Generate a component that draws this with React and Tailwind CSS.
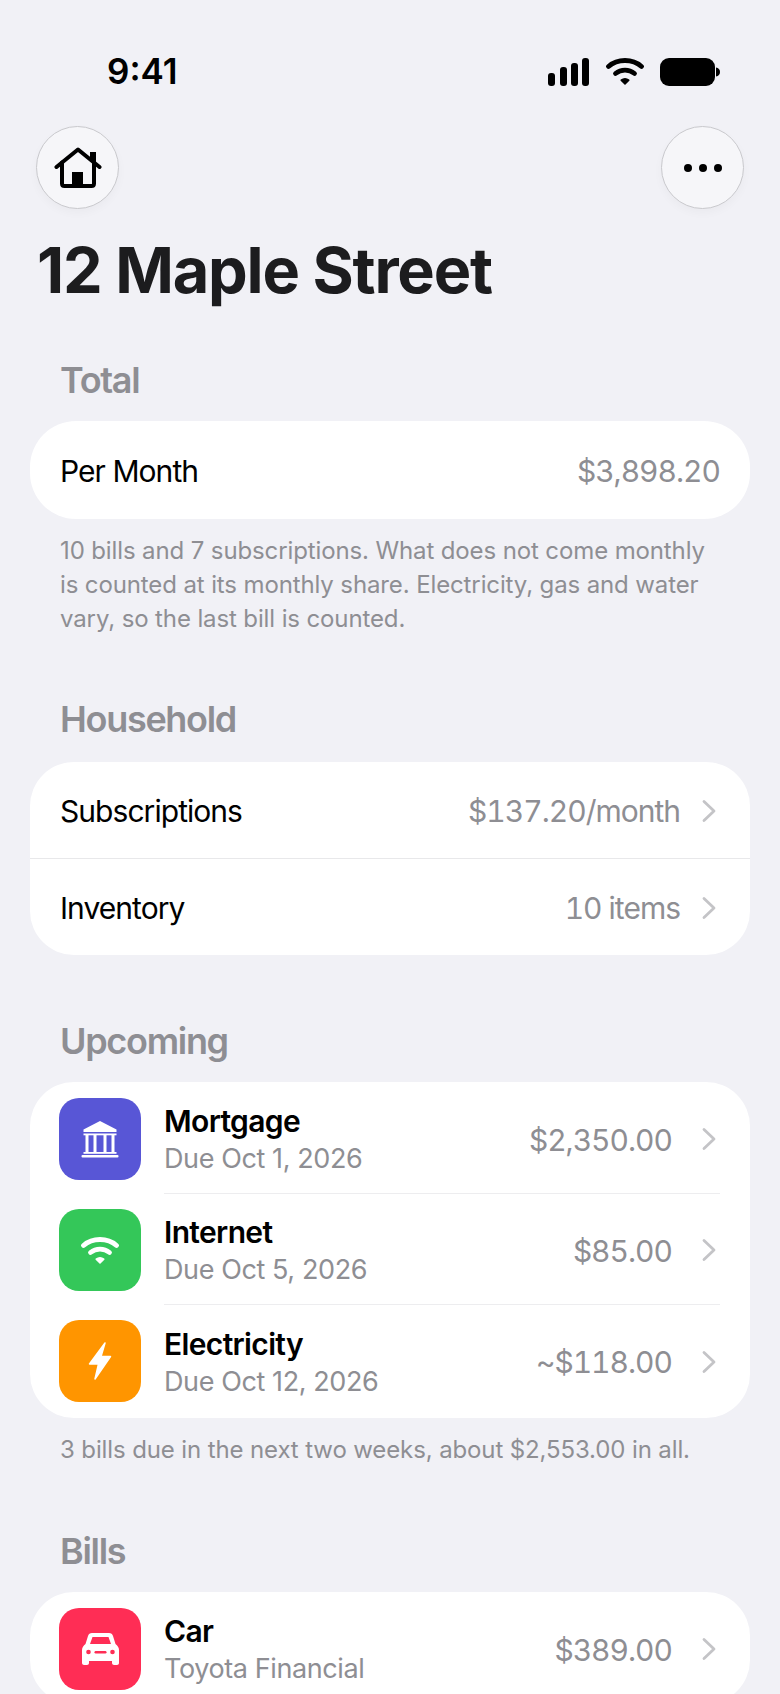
const FONT = 'font-["Inter","Liberation_Sans",sans-serif]';

function Signal() {
  return (
    <svg width="42" height="28" viewBox="0 0 42 28" fill="black">
      <rect x="0" y="15" width="7" height="13" rx="3" />
      <rect x="12" y="9" width="7" height="19" rx="3" />
      <rect x="23" y="5" width="7" height="23" rx="3" />
      <rect x="34" y="0" width="7" height="28" rx="3" />
    </svg>
  );
}

function WifiGlyph({ color = 'black', width = 38, height = 29 }) {
  return (
    <svg width={width} height={height} viewBox="0 0 38 29" fill="none" stroke={color} strokeWidth="4.800" strokeLinecap="round">
      <path d="M2.500 9.500C11.500 1.500 26.500 1.500 35.500 9.500" />
      <path d="M9.500 16.500C15 12 23 12 28.500 16.500" />
      <path d="M15.200 23.200L19 27L22.800 23.200C20.500 21.400 17.500 21.400 15.200 23.200Z" fill={color} strokeWidth="1.500" strokeLinejoin="round" />
    </svg>
  );
}

function Battery() {
  return (
    <svg width="60" height="28" viewBox="0 0 60 28" fill="black">
      <rect x="0" y="0" width="55" height="28" rx="9" />
      <path d="M56 9.500C58.500 10 60 11.500 60 14C60 16.500 58.500 18 56 18.500Z" />
    </svg>
  );
}

function HomeGlyph() {
  return (
    <svg width="48" height="42" viewBox="0 0 48 42" fill="none" stroke="black" strokeWidth="4" strokeLinecap="round" strokeLinejoin="round">
      <path d="M2.500 20L24 2.500L45.500 20" />
      <path d="M8 15.500V36.500C8 38 9 39 10.500 39H37.500C39 39 40 38 40 36.500V15.500" />
      <rect x="36" y="5" width="6" height="10" fill="black" stroke="none" />
      <rect x="18" y="25" width="11" height="15" fill="black" stroke="none" />
    </svg>
  );
}

function BankGlyph() {
  return (
    <svg width="38" height="37" viewBox="0 0 38 37" fill="white">
      <path d="M19 0L35.500 8.500V11H2.500V8.500Z" />
      <rect x="2.500" y="12.500" width="33" height="1.800" />
      <rect x="4.500" y="14" width="3" height="17.500" />
      <rect x="12.500" y="14" width="3" height="17.500" />
      <rect x="22.500" y="14" width="3" height="17.500" />
      <rect x="30.500" y="14" width="3" height="17.500" />
      <rect x="2.500" y="31" width="33" height="1.800" />
      <rect x="0.500" y="34" width="37" height="2.600" rx="1" />
    </svg>
  );
}

function BoltGlyph() {
  return (
    <svg width="24" height="38" viewBox="0 0 24 38" fill="white" stroke="white" strokeWidth="1.500" strokeLinejoin="round">
      <path d="M17 1L1.500 22H10.500L7 37L22.500 14.500H13L17 1Z" />
    </svg>
  );
}

function CarGlyph() {
  return (
    <svg width="37" height="32" viewBox="0 0 37 32" fill="white">
      <path d="M10 0H27C29 0 30.500 1 31 3L33.500 11C35.500 12.500 37 14.500 37 17V30C37 31 36 32 35 32H32C31 32 30 31 30 30V28H7V30C7 31 6 32 5 32H2C1 32 0 31 0 30V17C0 14.500 1.500 12.500 3.500 11L6 3C6.500 1 8 0 10 0Z" />
      <path d="M10.500 4H26.500L29 11H8Z" fill="#ff2d55" />
      <circle cx="6.500" cy="19" r="2.300" fill="#ff2d55" />
      <circle cx="30.500" cy="19" r="2.300" fill="#ff2d55" />
      <rect x="12.500" y="18" width="12" height="2.500" rx="1.200" fill="#ff2d55" />
    </svg>
  );
}

function Chevron() {
  return (
    <svg width="14" height="24" viewBox="0 0 14 24" fill="none" stroke="#c4c4c7" strokeWidth="2.800" strokeLinecap="round" strokeLinejoin="round" className="shrink-0">
      <path d="M2 2.500L12 12L2 21.500" />
    </svg>
  );
}

function SectionTitle({ children }) {
  return <h2 className="px-[60px] text-[36px] leading-[44px] font-semibold tracking-[-1.300px] text-[#8e8e93]">{children}</h2>;
}

function Note({ children }) {
  return <p className="mt-[15px] px-[60px] text-[24px] leading-[34px] tracking-[-0.120px] text-[#8e8e93]">{children}</p>;
}

function PlainRow({ label, value, arrow, border, height = 'h-[96px]' }) {
  return (
    <div className={`flex items-center pt-[2px] pl-[30px] ${height} ${arrow ? 'pr-[34px]' : 'pr-[30px]'} ${border ? 'border-b border-[#e8e8ea]' : ''}`}>
      <span className="text-[30px] tracking-[-0.950px] text-black">{label}</span>
      <span className="ml-auto text-[30px] tracking-[-1px] text-[#8e8e93] tabular-nums">{value}</span>
      {arrow && (
        <span className="ml-[22px] flex">
          <Chevron />
        </span>
      )}
    </div>
  );
}

function BillRow({ icon, color, title, sub, amount, last }) {
  return (
    <div className="flex h-[111px] pl-[29px] pr-[30px]">
      <div className={`mt-[15px] flex h-[82px] w-[82px] shrink-0 items-center justify-center rounded-[20px] ${color}`}>{icon}</div>
      <div className={`ml-[23px] flex min-w-0 flex-1 items-center pr-[4px] ${last ? '' : 'border-b border-[#ededef]'}`}>
        <div className="mt-[4px] flex flex-col">
          <span className="text-[30px] leading-[38px] font-semibold tracking-[-0.650px] text-black">{title}</span>
          <span className="text-[27px] leading-[38px] tracking-[-0.400px] text-[#8e8e93]">{sub}</span>
        </div>
        <span className="ml-auto mt-[4px] text-[30px] tracking-[-1px] text-[#8e8e93] tabular-nums">{amount}</span>
        <span className="ml-[30px] mt-[2px] flex">
          <Chevron />
        </span>
      </div>
    </div>
  );
}

function RoundButton({ children }) {
  return (
    <button className="flex h-[83px] w-[83px] items-center justify-center rounded-full border border-[#c9c9cd] bg-[#f6f6f9] shadow-[0_4px_10px_rgba(0,0,0,0.03)]">
      {children}
    </button>
  );
}

export default function App() {
  return (
    <div className={`${FONT} h-[1694px] w-[780px] overflow-hidden bg-[#f1f1f6]`}>
      <div className="flex h-[126px] items-start justify-between pt-[50px] pl-[107px] pr-[60px]">
        <span className="text-[35px] leading-[42px] font-semibold text-black">9:41</span>
        <div className="mt-[7px] flex items-center gap-[16px]">
          <Signal />
          <WifiGlyph />
          <Battery />
        </div>
      </div>

      <div className="flex justify-between px-[36px]">
        <RoundButton>
          <HomeGlyph />
        </RoundButton>
        <RoundButton>
          <div className="flex gap-[7px]">
            <span className="h-[8px] w-[8px] rounded-full bg-black" />
            <span className="h-[8px] w-[8px] rounded-full bg-black" />
            <span className="h-[8px] w-[8px] rounded-full bg-black" />
          </div>
        </RoundButton>
      </div>

      <h1 className="mt-[25px] pl-[37px] text-[63px] leading-[72px] font-bold tracking-[-1.200px] text-[#1c1c1e]">12 Maple Street</h1>

      <div className="mt-[52px]">
        <SectionTitle>Total</SectionTitle>
        <div className="mx-[30px] mt-[19px] rounded-[46px] bg-white">
          <PlainRow label="Per Month" value="$3,898.20" height="h-[98px]" />
        </div>
        <Note>
          10 bills and 7 subscriptions. What does not come monthly is counted at its monthly share. Electricity, gas and water vary, so the last bill is counted.
        </Note>
      </div>

      <div className="mt-[61px]">
        <SectionTitle>Household</SectionTitle>
        <div className="mx-[30px] mt-[21px] rounded-[44px] bg-white">
          <PlainRow label="Subscriptions" value="$137.20/month" arrow border height="h-[97px]" />
          <PlainRow label="Inventory" value="10 items" arrow />
        </div>
      </div>

      <div className="mt-[64px]">
        <SectionTitle>Upcoming</SectionTitle>
        <div className="mx-[30px] mt-[19px] rounded-[44px] bg-white pt-[1px] pb-[2px]">
          <BillRow icon={<BankGlyph />} color="bg-[#5856d6]" title="Mortgage" sub="Due Oct 1, 2026" amount="$2,350.00" />
          <BillRow icon={<WifiGlyph color="white" />} color="bg-[#34c759]" title="Internet" sub="Due Oct 5, 2026" amount="$85.00" />
          <BillRow icon={<BoltGlyph />} color="bg-[#ff9500]" title="Electricity" sub="Due Oct 12, 2026" amount="~$118.00" last />
        </div>
        <Note>3 bills due in the next two weeks, about $2,553.00 in all.</Note>
      </div>

      <div className="mt-[62px]">
        <SectionTitle>Bills</SectionTitle>
        <div className="mx-[30px] mt-[19px] rounded-[44px] bg-white pt-[1px]">
          <BillRow icon={<CarGlyph />} color="bg-[#ff2d55]" title="Car" sub="Toyota Financial" amount="$389.00" />
        </div>
      </div>
    </div>
  );
}
